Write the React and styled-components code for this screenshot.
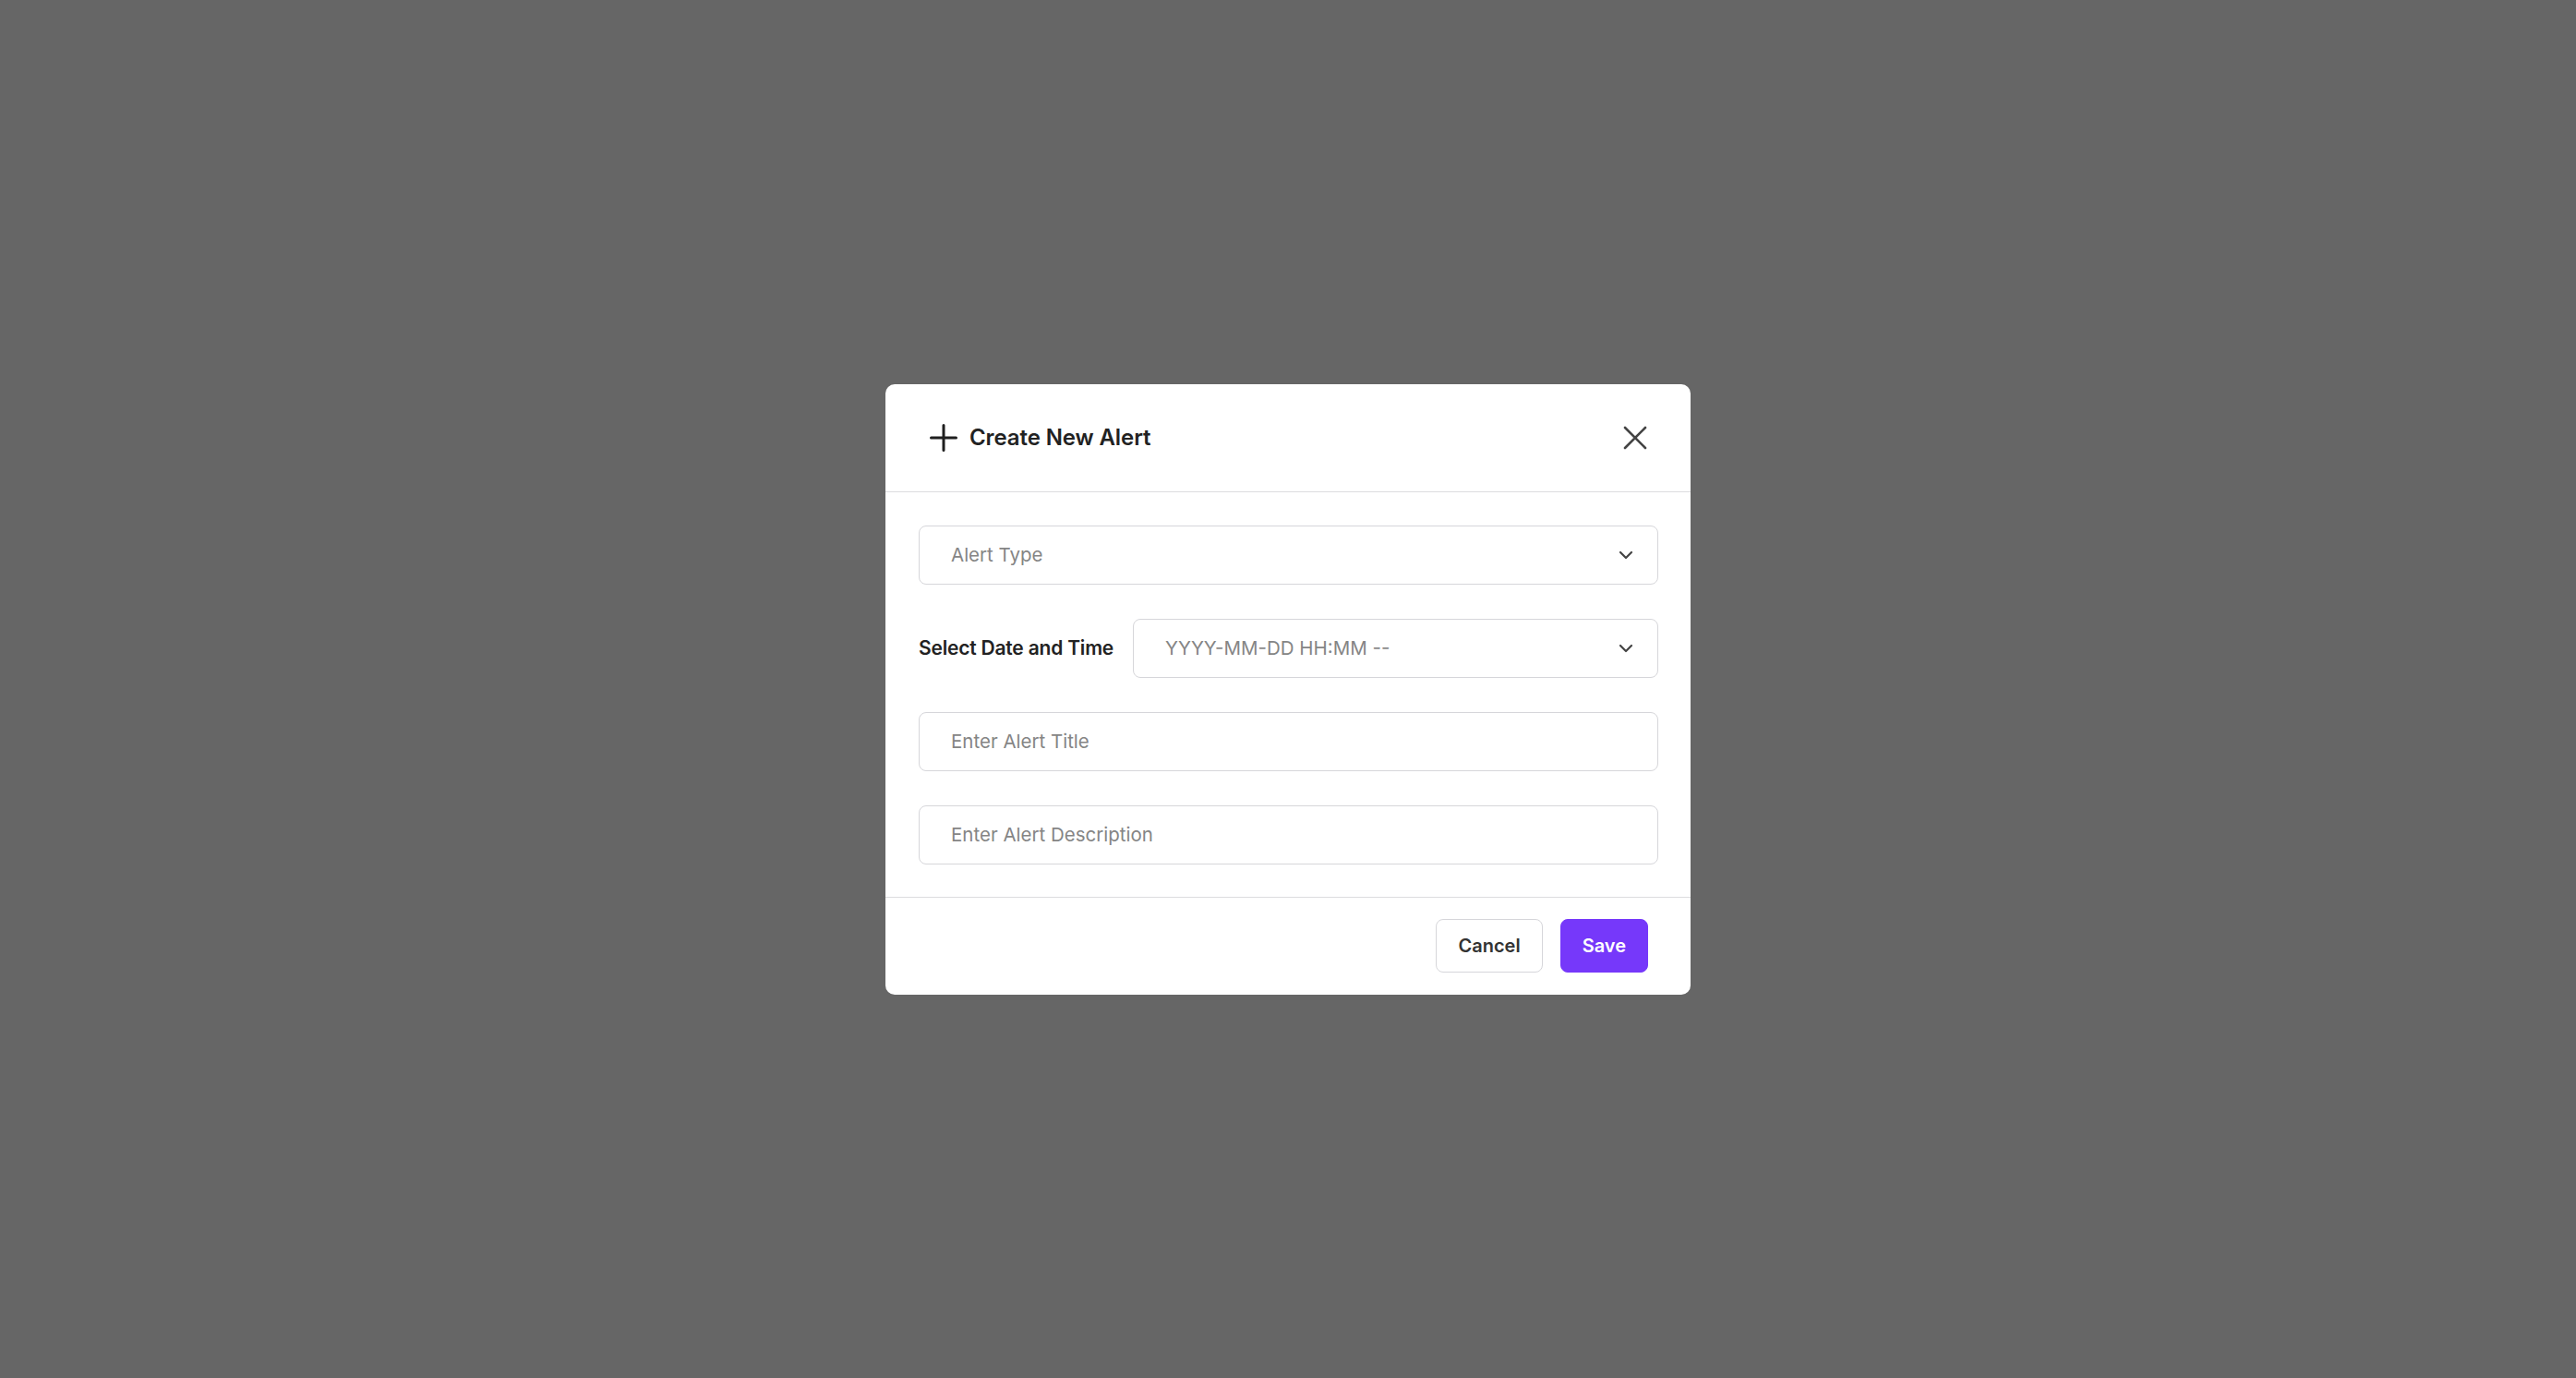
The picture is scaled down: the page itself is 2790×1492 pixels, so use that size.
import React from 'react';
import styled, { createGlobalStyle } from 'styled-components';

const GlobalStyle = createGlobalStyle`
  html, body {
    margin: 0;
    padding: 0;
    background: #666666;
    font-family: Inter, "Noto Sans", "Liberation Sans", sans-serif;
  }
  * { box-sizing: border-box; }
`;

const Overlay = styled.div`
  width: 100vw;
  height: 100vh;
  background: #666666;
  display: flex;
  align-items: center;
  justify-content: center;
`;

const Modal = styled.div`
  width: 872px;
  background: #ffffff;
  border-radius: 10px;
  display: flex;
  flex-direction: column;
  overflow: hidden;
`;

const Header = styled.div`
  height: 117px;
  padding: 0 47px 0 48px;
  display: flex;
  align-items: center;
  justify-content: space-between;
  border-bottom: 1.5px solid #dcdcdf;
`;

const Title = styled.h2`
  margin: 0;
  display: flex;
  align-items: center;
  gap: 13px;
  font-size: 24px;
  font-weight: 600;
  color: #222222;
  letter-spacing: -0.1px;
`;

const CloseButton = styled.button`
  border: none;
  background: none;
  padding: 0;
  display: flex;
  cursor: pointer;
`;

const Body = styled.div`
  padding: 36px 35px 35px 36px;
  display: flex;
  flex-direction: column;
  gap: 37px;
`;

const Row = styled.div`
  display: flex;
  align-items: center;
  gap: 21px;
`;

const Label = styled.label`
  font-size: 21px;
  font-weight: 600;
  color: #222222;
  white-space: nowrap;
  letter-spacing: -0.2px;
`;

const SelectBox = styled.div`
  flex: 1 0 auto;
  height: 64px;
  border: 1.5px solid #d6d6da;
  border-radius: 8px;
  padding: 0 26px 0 34px;
  display: flex;
  align-items: center;
  justify-content: space-between;
  font-size: 20.5px;
  color: #858585;
  cursor: pointer;
`;

const TextInput = styled.input`
  width: 100%;
  height: 64px;
  border: 1.5px solid #d6d6da;
  border-radius: 8px;
  padding: 0 34px;
  font-family: inherit;
  font-size: 20.5px;
  color: #222;
  outline: none;
  &::placeholder { color: #858585; }
`;

const Footer = styled.div`
  height: 106px;
  border-top: 1.5px solid #dcdcdf;
  padding: 0 46px;
  display: flex;
  align-items: center;
  justify-content: flex-end;
  gap: 19px;
`;

const Button = styled.button`
  height: 58px;
  padding: 0 ${(p) => (p.$primary ? '23px' : '23px')};
  border-radius: 8px;
  border: 1.5px solid ${(p) => (p.$primary ? '#7638fa' : '#d6d6da')};
  background: ${(p) => (p.$primary ? '#7638fa' : '#ffffff')};
  color: ${(p) => (p.$primary ? '#ffffff' : '#333333')};
  font-family: inherit;
  font-size: 20px;
  font-weight: 600;
  cursor: pointer;
`;

const PlusIcon = () => (
  <svg width="30" height="30" viewBox="0 0 30 30" fill="none" stroke="#1f1f1f" strokeWidth="3" strokeLinecap="round">
    <path d="M15 1.5v27M1.5 15h27" />
  </svg>
);

const CloseIcon = () => (
  <svg width="26" height="26" viewBox="0 0 26 26" fill="none" stroke="#444" strokeWidth="2.6" strokeLinecap="round">
    <path d="M2 2l22 22M24 2L2 24" />
  </svg>
);

const Chevron = () => (
  <svg width="16" height="10" viewBox="0 0 16 10" fill="none" stroke="#444" strokeWidth="2.2" strokeLinecap="round" strokeLinejoin="round">
    <path d="M2 2l6 6 6-6" />
  </svg>
);

const App = () => (
  <>
    <GlobalStyle />
    <Overlay>
      <Modal>
        <Header>
          <Title>
            <PlusIcon />
            Create New Alert
          </Title>
          <CloseButton aria-label="Close">
            <CloseIcon />
          </CloseButton>
        </Header>
        <Body>
          <SelectBox>
            Alert Type
            <Chevron />
          </SelectBox>
          <Row>
            <Label>Select Date and Time</Label>
            <SelectBox>
              YYYY-MM-DD HH:MM --
              <Chevron />
            </SelectBox>
          </Row>
          <TextInput placeholder="Enter Alert Title" />
          <TextInput placeholder="Enter Alert Description" />
        </Body>
        <Footer>
          <Button>Cancel</Button>
          <Button $primary>Save</Button>
        </Footer>
      </Modal>
    </Overlay>
  </>
);

export default App;
